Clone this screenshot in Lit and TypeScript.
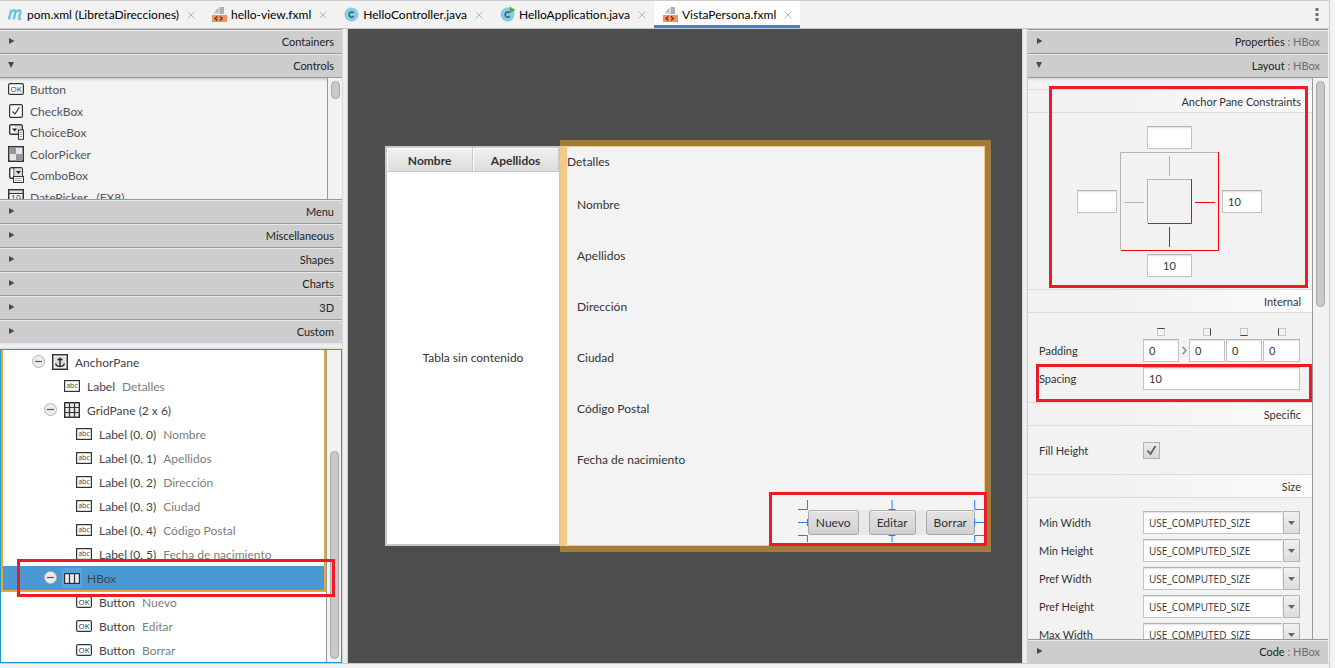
import { LitElement, html, svg, css, nothing } from "lit";
import { customElement } from "lit/decorators.js";
import { classMap } from "lit/directives/class-map.js";

type Icon = "button" | "check" | "choice" | "color" | "combo" | "date" | "anchor" | "label" | "grid" | "hbox";

interface TreeRow {
  depth: number;
  icon: Icon;
  name: string;
  info?: string;
  open?: boolean;
  selected?: boolean;
}

const tabs = [
  { icon: "maven", title: "pom.xml (LibretaDirecciones)" },
  { icon: "fxml", title: "hello-view.fxml" },
  { icon: "java", title: "HelloController.java" },
  { icon: "app", title: "HelloApplication.java" },
  { icon: "fxml", title: "VistaPersona.fxml", active: true },
];

const controls: { icon: Icon; name: string }[] = [
  { icon: "button", name: "Button" },
  { icon: "check", name: "CheckBox" },
  { icon: "choice", name: "ChoiceBox" },
  { icon: "color", name: "ColorPicker" },
  { icon: "combo", name: "ComboBox" },
  { icon: "date", name: "DatePicker   (FX8)" },
];

const fields = ["Nombre", "Apellidos", "Dirección", "Ciudad", "Código Postal", "Fecha de nacimiento"];

const paneRows: TreeRow[] = [
  { depth: 0, icon: "anchor", name: "AnchorPane", open: true },
  { depth: 1, icon: "label", name: "Label", info: "Detalles" },
  { depth: 1, icon: "grid", name: "GridPane (2 x 6)", open: true },
  ...fields.map((info, i): TreeRow => ({ depth: 2, icon: "label", name: `Label (0, ${i})`, info })),
  { depth: 1, icon: "hbox", name: "HBox", open: true, selected: true },
];

const buttonRows: TreeRow[] = ["Nuevo", "Editar", "Borrar"].map((info) => ({
  depth: 2,
  icon: "button",
  name: "Button",
  info,
}));

const frame = (extra: unknown) => svg`<rect x=".75" y=".75" width="14.5" height="14.5" fill="#fff" stroke="#333" stroke-width="1.5"/>${extra}`;

const glyphs: Record<Icon, unknown> = {
  button: svg`<rect x=".6" y="2.6" width="14.8" height="10.8" rx="1.5" fill="#fff" stroke="#333" stroke-width="1.2"/>
    <text x="8" y="11" font-size="8" text-anchor="middle" fill="#333" font-family="Open Sans, sans-serif">OK</text>`,
  check: svg`<rect x="1.6" y="1.6" width="12.8" height="12.8" rx="1.5" fill="#fff" stroke="#333" stroke-width="1.2"/>
    <path d="M4.5 8.5 7 11l4.500-7" fill="none" stroke="#444" stroke-width="1.3"/>`,
  choice: svg`<rect x="1.700" y=".7" width="12.600" height="9.600" rx="1.500" fill="#fff" stroke="#333" stroke-width="1.400"/>
    <path d="M7 2h6v7H7z" fill="#ddd"/><path d="M4 4.500h5L6.500 7.500z" fill="#222"/>
    <rect x="10.500" y="6" width="5" height="9.300" fill="#fff" stroke="#333"/>
    <path d="M11.500 8.500h3M11.500 10.500h3M11.500 12.500h3" stroke="#888" stroke-width=".8"/>`,
  color: frame(svg`<path d="M2 2h12v12H2z" fill="#e4e4e4"/><path d="M2 2h6v6H2zM8 8h6v6H8z" fill="#979797"/>`),
  combo: svg`<rect x="1.700" y=".7" width="12.600" height="10.600" rx="1.500" fill="#fff" stroke="#333" stroke-width="1.400"/>
    <path d="M6 1v9" stroke="#333"/><path d="M6.500 1.500h7.500v8H6.500z" fill="#ddd"/><path d="M8 4h5l-2.500 3z" fill="#222"/>
    <rect x="5.500" y="9.500" width="10" height="6" fill="#fff" stroke="#333"/>
    <path d="M7 11.500h7M7 13.500h7" stroke="#999" stroke-width=".8"/>`,
  date: frame(svg`<path d="M2 2h12v2H2z" fill="#ddd"/><path d="M1 4.500h14" stroke="#333"/>
    <text x="8" y="13" font-size="9" text-anchor="middle" fill="#333" font-family="Open Sans, sans-serif">19</text>`),
  anchor: frame(svg`<path d="M2.500 2.500h11v11h-11z" fill="#ddd"/>
    <path d="M8 3.500v9M5.500 5.500h5M3.700 9.500c.3 2 2 3 4.300 3s4-1 4.300-3" fill="none" stroke="#222" stroke-width="1.400"/>`),
  label: svg`<rect x=".6" y="2.600" width="14.800" height="10.800" fill="#fff" stroke="#333" stroke-width="1.200"/>
    <text x="8" y="10" font-size="7" text-anchor="middle" fill="#444" font-family="Open Sans, sans-serif">abc</text>`,
  grid: frame(svg`<path d="M2.500 2.500h11v11h-11z" fill="#dfe5df"/><path d="M5.500 0v16M10.500 0v16M0 5.500h16M0 10.500h16" stroke="#333" stroke-width="1.200"/>`),
  hbox: svg`<rect x="-2" y="-2" width="20" height="20" rx="2" fill="#6cacdf" opacity=".6"/>
    <rect x=".600" y="3.600" width="14.800" height="9.800" fill="#e8eaf2" stroke="#333" stroke-width="1.200"/>
    <path d="M5.500 4v9M10.500 4v9" stroke="#333" stroke-width="1.200"/>`,
};

const icon = (name: Icon) => html`<svg class="icon" width="16" height="16" viewBox="0 0 16 16" aria-hidden="true">${glyphs[name]}</svg>`;

const tabGlyphs: Record<string, unknown> = {
  maven: svg`<path d="M1.500 12 3.400 4.200M2.900 6.300C4 4.400 7 3.500 6.800 6L5.400 12M6.700 6.300C8 4.400 11.300 3.500 11 6L9.800 10.800c-.2 1 .7 1 1.700.4" transform="matrix(1.2 0 0 1.2 -.8 -2)" fill="none" stroke="#6fc3e6" stroke-width="2.100"/>`,
  fxml: svg`<path d="M2 5.500 6.500 1v4.500zM7.500 0H12v7H2V6.500h5.500z" fill="#a7b0b7"/><path d="M0 8h15v7H0z" fill="#f4915f"/>
    <path d="M5.300 9.500 3 11.500l2.300 2M8 9.500l2.300 2-2.300 2" fill="none" stroke="#5a3426" stroke-width="1.200"/>`,
  java: svg`<circle cx="7.500" cy="7.500" r="7" fill="#84cde6"/><path d="M9.700 5.900A2.600 2.600 0 1 0 9.700 9.300" fill="none" stroke="#3c5560" stroke-width="1.400"/>`,
  app: svg`<circle cx="7.500" cy="7.500" r="7" fill="#84cde6"/><path d="M9.700 5.900A2.600 2.600 0 1 0 9.700 9.300" fill="none" stroke="#3c5560" stroke-width="1.400"/>
    <path d="M9.500-.5 15.500 3l-6 3.500z" fill="#5fa83f"/>`,
};

@customElement("app-root")
export class AppRoot extends LitElement {
  static styles = css`
    :host {
      display: grid;
      grid-template-columns: minmax(0, 1fr) 6px;
      height: 100vh;
      overflow: hidden;
      background: #f2f2f2;
      color: #333;
      font-family: Lato, "Open Sans", sans-serif;
      font-size: 11px;
      line-height: 16px;
    }
    * { box-sizing: border-box; }
    button, input, select { font: inherit; color: inherit; margin: 0; }
    svg { display: block; flex: none; }
    .window { display: grid; grid-template-rows: 29px minmax(0, 1fr) 5px; min-height: 0; }
    .edge { border-left: 1px solid #c9c9c9; background: #f2f2f2; }
    .foot { border-top: 1px solid #c9c9c9; }

    .tabs { display: flex; border-top: 1px solid #cbcbcb; border-bottom: 1px solid #c6c6c6; background: #f2f2f2; }
    .tab {
      display: flex; align-items: center; gap: 4px; padding: 0 8px 0 9px;
      color: #000; font-size: 12px; white-space: nowrap; border-bottom: 3px solid transparent;
    }
    .tab:first-child { padding-left: 8px; }
    .tab.active { background: #fff; border-bottom-color: #4083c9; }
    .tab-link { color: inherit; text-decoration: none; padding-top: 3px; }
    .tab svg { margin-top: 3px; }
    .close { width: 8px; padding: 0; border: 0; background: none; margin-left: 4px; }
    .more { margin-left: auto; width: 24px; padding: 0; border: 0; background: none; display: grid; place-items: center; }

    .work { display: grid; grid-template-columns: 342px 6px minmax(0, 1fr) 6px 300px; padding-right: 1px; min-height: 0; }
    .split { background: linear-gradient(90deg, #d2d2d2, #f4f4f4 40%, #e4e4e4); border-right: 1px solid #d0d0d0; }
    .hsplit { height: 6px; background: linear-gradient(#e2e2e2, #f4f4f4 50%, #dcdcdc); }
    .side { display: flex; flex-direction: column; min-height: 0; min-width: 0; }

    .head {
      display: flex; align-items: center; height: 24px; flex: none; width: 100%;
      border: 0; border-top: 1px solid #999; box-shadow: inset 0 1px #e8e8e8;
      background: #cdcdcd; padding: 1px 8px 0; text-align: right; color: #222;
    }
    .head svg { margin-bottom: 2px; }
    .head .title { flex: 1; }
    .dim { color: #6b6b6b; }

    .scroll { display: grid; grid-template-columns: minmax(0, 1fr) 15px; min-height: 0; overflow: hidden; }
    .track { border-left: 1px solid #999; background: #f2f2f2; padding: 3px; }
    .thumb { width: 9px; border: 1px solid #a6a6a6; border-radius: 5px; background: #c9c9c9; }
    .thumb.short { height: 18px; }
    .thumb.long { height: 226px; }
    .thumb.tall { height: 208px; }

    .library { height: 122px; flex: none; border-top: 1px solid #999; background: #f3f3f3; box-shadow: inset 0 3px 3px -2px #bbb; }
    .list { list-style: none; margin: 0; padding: 1px 0 0 8px; overflow: hidden; }
    .list li { display: flex; align-items: center; gap: 6px; height: 22px; color: #555; white-space: pre; font-size: 12px; }
    .list li:nth-child(even) { height: 21px; }
    .list .icon { margin-bottom: 2px; }

    .tree { position: relative; flex: 1; border: 1px solid #1a9dcd; background: #fff; display: grid; grid-template-columns: minmax(0, 1fr) 15px; min-height: 0; font-size: 12px; }
    .tree .track { display: flex; flex-direction: column; justify-content: flex-end; }
    .branch { border: 2px solid #eba532; border-top: 0; margin-bottom: -2px; }
    .leaves { padding-left: 2px; }
    .row { display: flex; align-items: center; height: 24px; white-space: nowrap; color: #444; padding-top: 1px; }
    .row.selected { background: #4a99d3; }
    .row .icon { margin: 0 7px; overflow: visible; margin-bottom: 2px; }
    .toggle { width: 13px; height: 13px; padding: 0; border: 1px solid #b4b4b4; border-radius: 50%; background: #ececec; display: grid; place-items: center; margin-bottom: 3px; }
    .blank { width: 13px; }
    .info { color: #7d7d7d; margin-left: 7px; }

    .mark { position: absolute; border: 3px solid #ed1c24; pointer-events: none; }
    .mark.hbox-row { left: 16px; right: 6px; bottom: 65px; height: 38px; }
    .mark.actions { left: -39px; right: -12px; top: -18px; bottom: -11px; }
    .mark.anchors { left: 21px; right: 4px; top: -3px; bottom: 1px; }
    .mark.gap { left: -3px; right: -12px; top: -3px; bottom: -12px; }

    .canvas {
      display: grid; place-items: center; min-width: 0; overflow: hidden; color: #333;
      background: conic-gradient(#505050 25%, #4b4b4b 0 50%, #505050 0 75%, #4b4b4b 0) 0 0 / 4px 4px;
    }
    .scene { display: grid; grid-template-columns: 175px minmax(0, 1fr); width: 600px; height: 400px; }
    .table { display: flex; flex-direction: column; border: 2px solid #c8c8c8; border-right-width: 1px; border-top-width: 1px; background: #fff; }
    .grid-head { width: 100%; border-collapse: collapse; table-layout: fixed; }
    .grid-head th { height: 24px; padding: 2px 0 0; font-size: 12px; font-weight: 700; border: 1px solid #c8c8c8; border-width: 1px 1px 1px 0; background: linear-gradient(#f0f0f0, #dcdcdc); box-shadow: inset 1px 1px #fff; }
    .empty { flex: 1; display: grid; place-items: center; margin: 0; font-size: 12px; }
    .pane { position: relative; display: flex; flex-direction: column; background: #f3f3f3; padding: 8px 10px 11px 17px; font-size: 12px; }
    .halo { position: absolute; inset: -6px -6px -6px 0; border: 7px solid rgba(240, 167, 46, 0.53); pointer-events: none; }
    .detail-title { margin: 0 0 9px -10px; }
    .detail-grid { display: grid; grid-auto-rows: 51px; align-items: center; }
    .actions-row { position: relative; display: flex; gap: 10px; margin: auto 0 0 auto; background: #e8e8e8; }
    .push { height: 25px; padding: 0 7px; border: 1px solid #a9a9a9; border-radius: 3px; background: linear-gradient(#e4e4e4, #cfcfcf); box-shadow: inset 0 1px #f2f2f2; }
    .handles { position: absolute; left: -10px; top: -10px; width: calc(100% + 20px); height: calc(100% + 17px); overflow: visible; pointer-events: none; }

    .sheet { display: grid; grid-template-columns: minmax(0, 1fr) 16px; flex: 1; min-height: 0; overflow: hidden; border-top: 1px solid #999; box-shadow: inset 0 3px 3px -2px #ccc; }
    .props { overflow: hidden; padding-top: 11px; }
    .section { margin: 0; height: 24px; padding: 4px 11px 0 0; font-size: 11px; font-weight: 400; line-height: 16px; text-align: right; border: 1px solid #dcdcdc; border-width: 1px 0; background: linear-gradient(90deg, #f1f1f1 30%, #fcfcfc); }
    .body { position: relative; display: grid; gap: 5px; padding: 13px 12px 12px 11px; }
    .line { position: relative; display: grid; grid-template-columns: 104px minmax(0, 1fr); align-items: end; min-height: 23px; line-height: 23px; }
    .box { width: 100%; min-width: 0; height: 23px; padding: 0 5px; border: 1px solid #c2c2c2; border-top-color: #b2b2b2; border-radius: 0; background: #fff; box-shadow: inset 0 2px 2px -1px #ddd; outline: 0; appearance: none; }
    select.box { font-family: "Open Sans", sans-serif; font-size: 10px; }
    .quad { display: flex; gap: 1px; align-items: end; padding-top: 2px; }
    .side-field { display: grid; gap: 3px; justify-items: center; flex: 0 0 36px; }
    .side-field:last-child { flex: 1; }
    .caret { flex: 0 0 8px; height: 23px; display: grid; place-items: center; }
    .edge-mark { width: 8px; height: 8px; border: 1px solid #c8c8c8; }
    .edge-mark.top { border-top-color: #444; }
    .edge-mark.right { border-right-color: #444; }
    .edge-mark.bottom { border-bottom-color: #444; }
    .edge-mark.left { border-left-color: #444; }
    .tick { appearance: none; width: 17px; height: 17px; margin: 0 0 3px; border: 1px solid #b0b0b0; background: linear-gradient(#ececec, #d8d8d8); display: grid; place-items: center; }
    .tick::before { content: ""; width: 10px; height: 10px; background: #666; clip-path: polygon(0 55%, 18% 45%, 38% 70%, 82% 0, 100% 8%, 42% 100%); }
    .combo { display: grid; grid-template-columns: minmax(0, 1fr) 17px; }
    .combo .box { grid-area: 1 / 1 / 2 / 3; }
    .arrow { grid-area: 1 / 2; display: grid; place-items: center; border: 1px solid #b4b4b4; background: linear-gradient(#f0f0f0, #dcdcdc); box-shadow: -1px 0 #f2f2f2; pointer-events: none; z-index: 1; }
    .constraints { display: grid; grid-template: 23px 99px 23px / 40px 99px 40px; gap: 3px; justify-content: center; place-items: center; padding: 13px 1px 12px 0; }
    .constraints .box { width: 40px; }
    .constraints .n, .constraints .s { width: 45px; text-align: center; }
    .n, .s { grid-column: 2; }
    .w { grid-area: 2 / 1; }
    .e { grid-area: 2 / 3; }
    .n { grid-row: 1; }
    .s { grid-row: 3; }
    .diagram { grid-area: 2 / 2; }
    .cap { position: relative; }
  `;

  private head(title: string, open = false, target = "") {
    return html`<button class="head" aria-expanded=${open}>
      <svg width="8" height="8" viewBox="0 0 8 8" aria-hidden="true">
        <path d=${open ? "M0 1h6L3 7z" : "M1 1l5.500 3L1 7z"} fill="#4a4a4a"/>
      </svg>
      <span class="title">${title}${target ? html` <span class="dim">: ${target}</span>` : nothing}</span>
    </button>`;
  }

  private row(r: TreeRow) {
    return html`<div class=${classMap({ row: true, selected: !!r.selected })} role="treeitem" style="padding-left:${29 + r.depth * 12}px">
      ${r.open
        ? html`<button class="toggle" aria-label="Contraer ${r.name}"><svg width="7" height="7"><path d="M0 3.500h7" stroke="#555" stroke-width="1.200"/></svg></button>`
        : html`<span class="blank"></span>`}
      ${icon(r.icon)}<span>${r.name}</span>${r.info ? html`<span class="info">${r.info}</span>` : nothing}
    </div>`;
  }

  private handles() {
    return html`<svg class="handles" viewBox="0 0 188 42" preserveAspectRatio="none" aria-hidden="true">
      <path d="M9.500 0v9.500H0M0 22.500h9M9.500 19v7M0 35.500h9.500V42M94.500 0v9M91 9.500h7M91 35.500h7M94.500 36v6M177.500 0v9.500H188M178 22.500h10M177.500 19v7M188 35.500h-10.500V42" fill="none" stroke="#1e7dfa"/>
    </svg>`;
  }

  render() {
    return html`
      <div class="window">
        <nav class="tabs">
          ${tabs.map((t) => html`<div class=${classMap({ tab: true, active: !!t.active })}>
            <svg width="15" height="15" viewBox="0 0 15 15" overflow="visible" aria-hidden="true">${tabGlyphs[t.icon]}</svg>
            <a class="tab-link" href="#">${t.title}</a>
            <button class="close" aria-label="Cerrar ${t.title}"><svg width="8" height="8"><path d="M.5.500l7 7M7.500.500l-7 7" stroke="#b4b8bc"/></svg></button>
          </div>`)}
          <button class="more" aria-label="Más"><svg width="4" height="13"><path d="M.5 0h3v3h-3zM.5 5h3v3h-3zM.5 10h3v3h-3z" fill="#6e6e6e"/></svg></button>
        </nav>
        <main class="work">
          <aside class="side">
            ${this.head("Containers")}${this.head("Controls", true)}
            <div class="scroll library">
              <ul class="list">${controls.map((c) => html`<li>${icon(c.icon)}<span>${c.name}</span></li>`)}</ul>
              <div class="track"><div class="thumb short"></div></div>
            </div>
            ${["Menu", "Miscellaneous", "Shapes", "Charts", "3D", "Custom"].map((t) => this.head(t))}
            <div class="hsplit"></div>
            <div class="tree" role="tree">
              <div>
                <div class="branch">${paneRows.map((r) => this.row(r))}</div>
                <div class="leaves">${buttonRows.map((r) => this.row(r))}</div>
              </div>
              <div class="track"><div class="thumb tall"></div></div>
              <div class="mark hbox-row"></div>
            </div>
          </aside>
          <div class="split"></div>
          <section class="canvas">
            <div class="scene">
              <div class="table">
                <table class="grid-head"><thead><tr><th>Nombre</th><th>Apellidos</th></tr></thead></table>
                <p class="empty">Tabla sin contenido</p>
              </div>
              <div class="pane">
                <p class="detail-title">Detalles</p>
                <div class="detail-grid">${fields.map((f) => html`<span>${f}</span>`)}</div>
                <div class="halo"></div>
                <div class="actions-row">
                  <button class="push">Nuevo</button><button class="push">Editar</button><button class="push">Borrar</button>
                  ${this.handles()}
                  <div class="mark actions"></div>
                </div>
              </div>
            </div>
          </section>
          <div class="split"></div>
          <aside class="side">
            ${this.head("Properties", false, "HBox")}${this.head("Layout", true, "HBox")}
            <div class="sheet">
              <div class="props">
                <div class="cap">
                  <h2 class="section">Anchor Pane Constraints</h2>
                  <div class="constraints">
                    <input class="box n" aria-label="Arriba">
                    <input class="box w" aria-label="Izquierda">
                    <svg class="diagram" width="99" height="99" aria-hidden="true" fill="none">
                      <path d="M.5 98V.5H98M27.500 71V27.500H71M49.500 4v20M4 50.500h20" stroke="#b5b5b5"/>
                      <path d="M98.500 0v98.500H1M71.500 27v44.500H28M49.500 75v20M75 50.500h20" stroke="#f00"/>
                    </svg>
                    <input class="box e" aria-label="Derecha" value="10">
                    <input class="box s" aria-label="Abajo" value="10">
                  </div>
                  <div class="mark anchors"></div>
                </div>
                <h2 class="section">Internal</h2>
                <div class="body">
                  <div class="line">
                    <label for="pad-top">Padding</label>
                    <div class="quad">
                      ${["top", "right", "bottom", "left"].map((s, i) => html`
                        <div class="side-field"><span class="edge-mark ${s}"></span><input class="box" id="pad-${s}" aria-label="Padding ${s}" value="0"></div>
                        ${i === 0 ? html`<span class="caret"><svg width="5" height="9"><path d="M.7.700 4 4.500.7 8.300" fill="none" stroke="#888" stroke-width="1.400"/></svg></span>` : nothing}`)}
                    </div>
                  </div>
                  <div class="line">
                    <label for="spacing">Spacing</label><input class="box" id="spacing" value="10">
                    <div class="mark gap"></div>
                  </div>
                </div>
                <h2 class="section">Specific</h2>
                <div class="body">
                  <div class="line"><label for="fill">Fill Height</label><input class="tick" type="checkbox" id="fill" checked></div>
                </div>
                <h2 class="section">Size</h2>
                <div class="body">
                  ${["Min Width", "Min Height", "Pref Width", "Pref Height", "Max Width"].map((l, i) => html`
                    <div class="line">
                      <label for="size-${i}">${l}</label>
                      <div class="combo">
                        <select class="box" id="size-${i}"><option>USE_COMPUTED_SIZE</option></select>
                        <span class="arrow"><svg width="7" height="4"><path d="M0 0h7L3.500 4z" fill="#666"/></svg></span>
                      </div>
                    </div>`)}
                </div>
              </div>
              <div class="track"><div class="thumb long"></div></div>
            </div>
            ${this.head("Code", false, "HBox")}
          </aside>
        </main>
        <div class="foot"></div>
      </div>
      <div class="edge"></div>
    `;
  }
}
